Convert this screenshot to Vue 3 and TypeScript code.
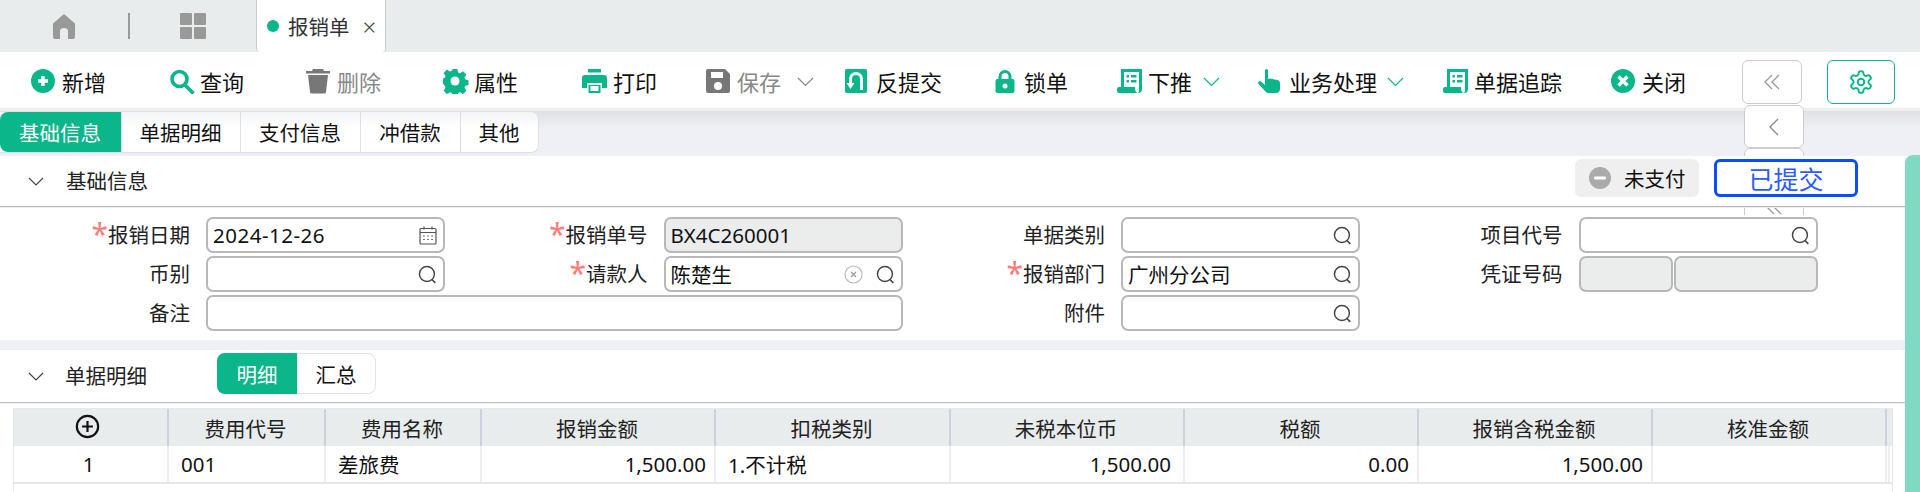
<script setup lang="ts">
interface Shape { d: string; fill?: string; stroke?: string; sw?: number }
interface Tool { label: string; w: number; icon: Shape[]; off?: boolean; chev?: number; chevOff?: boolean }

const G = '#0bb68a'
const K = '#777777'
const W = '#ffffff'

const plus: Shape[] = [
  { d: 'M12 0a12 12 0 1 0 0 24a12 12 0 1 0 0-24z', fill: G },
  { d: 'M10.3 7h3.4v3.3H17v3.4h-3.3V17h-3.4v-3.3H7v-3.4h3.3z', fill: W }
]
const search: Shape[] = [
  { d: 'M10.5 2.5a7.5 7.5 0 1 0 0 15a7.5 7.5 0 1 0 0-15z', stroke: G, sw: 3.6 },
  { d: 'M16 16l8.5 8.5', stroke: G, sw: 3.6 }
]
const trash: Shape[] = [
  { d: 'M7 0h10l1 2h6v2.6H0V2h6z', fill: K },
  { d: 'M2 6h20l-2 17q-.1 1.6-2 1.6H6q-1.9 0-2-1.6z', fill: K }
]
const cog: Shape[] = [
  { d: 'M9.6 0h4.8l.7 3.4 2 .8 2.9-1.9 3.4 3.4-1.9 2.9.8 2 3.2.7v4.8l-3.2.7-.8 2 1.9 2.9-3.4 3.4-2.9-1.9-2 .8-.7 3.4H9.6l-.7-3.4-2-.8-2.9 1.9-3.4-3.4 1.9-2.9-.8-2L0 14.400v-4.800l1.700-.7.800-2-1.900-2.900 3.400-3.400 2.900 1.900 2-.8z', fill: G },
  { d: 'M12 7.500a4.500 4.500 0 1 0 0 9a4.500 4.500 0 1 0 0-9z', fill: W }
]
const printer: Shape[] = [
  { d: 'M6 0h13v3.500H6z', fill: G },
  { d: 'M3 6h19q3 0 3 3v10h-5v-5H5v5H0V9q0-3 3-3z', fill: G },
  { d: 'M6.500 16h12v8h-12z', fill: G },
  { d: 'M8.500 17h8v5h-8z', fill: W }
]
const floppy: Shape[] = [
  { d: 'M2 0h17l5 5v17q0 2-2 2H2q-2 0-2-2V2q0-2 2-2z', fill: K },
  { d: 'M5 3h12v6H5z', fill: W },
  { d: 'M12 13a4 4 0 1 0 0 8a4 4 0 1 0 0-8z', fill: W }
]
const undo: Shape[] = [
  { d: 'M2 0h18q2 0 2 2v20q0 2-2 2H2q-2 0-2-2V2q0-2 2-2z', fill: G },
  { d: 'M16.500 21V10a5.500 5.500 0 0 0-11 0v5', stroke: W, sw: 3 },
  { d: 'M1.500 14h8l-4 6z', fill: W }
]
const lock: Shape[] = [
  { d: 'M7 11V7.500a5 5 0 0 1 10 0V11', stroke: G, sw: 3 },
  { d: 'M4.500 10h15q2 0 2 2v10q0 2-2 2h-15q-2 0-2-2V12q0-2 2-2z', fill: G },
  { d: 'M12 14.500a2.500 2.500 0 1 0 0 5a2.500 2.500 0 1 0 0-5z', fill: W }
]
const doc: Shape[] = [
  { d: 'M4 0h21v20q0 3-3 4h-1q1-1 1-3V3H7v15H4z', fill: G },
  { d: 'M0 20q0-2 2-2h16v2q0 2.500 2 4H2q-2 0-2-2z', fill: G },
  { d: 'M9.500 6h2.500v2.500H9.500zM14 6h5.500v2.500H14zM9.500 11h2.500v2.500H9.500zM14 11h5.500v2.500H14z', fill: G }
]
const hand: Shape[] = [
  { d: 'M7 1.500q0-1.500 1.500-1.500T10 1.500V10l2-.5 1 .3 2 .2 1 .5 2.500.3q3.500.7 3.500 3.700v5q0 4.500-4.500 4.500H10q-1.500 0-3-2L.5 15q-1-1.500.2-2.500t2.800.500L7 16z', fill: G }
]
const close: Shape[] = [
  { d: 'M12 0a12 12 0 1 0 0 24a12 12 0 1 0 0-24z', fill: G },
  { d: 'M7.500 7.500l9 9M16.500 7.500l-9 9', stroke: W, sw: 3.400 }
]

const tools: Tool[] = [
  { label: '新增', w: 138, icon: plus },
  { label: '查询', w: 137, icon: search },
  { label: '删除', w: 137, icon: trash, off: true },
  { label: '属性', w: 139, icon: cog },
  { label: '打印', w: 124, icon: printer },
  { label: '保存', w: 139, icon: floppy, off: true, chev: 16, chevOff: true },
  { label: '反提交', w: 148, icon: undo },
  { label: '锁单', w: 124, icon: lock },
  { label: '下推', w: 141, icon: doc, chev: 11 },
  { label: '业务处理', w: 185, icon: hand, chev: 10 },
  { label: '单据追踪', w: 168, icon: doc },
  { label: '关闭', w: 90, icon: close }
]

const tabs = ['基础信息', '单据明细', '支付信息', '冲借款', '其他']

const columns = [
  { name: '费用代号', text: '001', align: 'left', pad: 7 },
  { name: '费用名称', text: '差旅费', align: 'left', pad: 7 },
  { name: '报销金额', text: '1,500.00', align: 'right', pad: 8 },
  { name: '扣税类别', text: '1.不计税', align: 'left', pad: 7 },
  { name: '未税本位币', text: '1,500.00', align: 'right', pad: 12 },
  { name: '税额', text: '0.00', align: 'right', pad: 8 },
  { name: '报销含税金额', text: '1,500.00', align: 'right', pad: 8 },
  { name: '核准金额', text: '', align: 'right', pad: 7 }
]
</script>

<template>
  <div class="page">
    <header class="topbar">
      <span class="home">
        <svg width="24" height="25" viewBox="0 0 24 25"><path d="M12 0l11 9.500V23q0 2-2 2h-5v-8q0-3-4-3t-4 3v8H3q-2 0-2-2V9.500z" fill="#999" /></svg>
      </span>
      <span class="divider"></span>
      <span class="apps">
        <i></i><i></i><i></i><i></i>
      </span>
      <div class="doc-tab">
        <span class="dot"></span>
        <span class="doc-name">报销单</span>
        <span class="doc-x">×</span>
      </div>
    </header>

    <nav class="toolbar">
      <div v-for="t in tools" :key="t.label" class="tool" :class="{ off: t.off }" :style="{ width: t.w + 'px' }">
        <svg class="tool-icon" width="26" height="25" viewBox="0 0 26 25">
          <path
            v-for="(s, i) in t.icon"
            :key="i"
            :d="s.d"
            :fill="s.fill || 'none'"
            :stroke="s.stroke || 'none'"
            :stroke-width="s.sw || 0"
          />
        </svg>
        <span>{{ t.label }}</span>
        <svg v-if="t.chev" class="chev" :style="{ marginLeft: t.chev + 'px' }" width="17" height="10" viewBox="0 0 17 10">
          <path d="M1 1l7.500 7.500L16 1" fill="none" :stroke="t.chevOff ? '#888' : '#0bb68a'" stroke-width="1.200" />
        </svg>
      </div>
      <div class="tool-right">
        <button class="square">
          <svg width="18" height="16" viewBox="0 0 18 16"><path d="M9 1L2 8l7 7M16 1L9 8l7 7" fill="none" stroke="#999" stroke-width="1.300" /></svg>
        </button>
        <button class="square cfg">
          <svg width="26" height="26" viewBox="0 0 24 24" fill="none" stroke="#0bb68a" stroke-width="1.800">
            <path d="M12.220 2h-.44a2 2 0 0 0-2 2v.18a2 2 0 0 1-1 1.730l-.43.25a2 2 0 0 1-2 0l-.15-.08a2 2 0 0 0-2.730.73l-.22.38a2 2 0 0 0 .73 2.730l.15.1a2 2 0 0 1 1 1.720v.51a2 2 0 0 1-1 1.740l-.15.09a2 2 0 0 0-.73 2.730l.22.38a2 2 0 0 0 2.730.73l.15-.08a2 2 0 0 1 2 0l.43.25a2 2 0 0 1 1 1.730V20a2 2 0 0 0 2 2h.44a2 2 0 0 0 2-2v-.18a2 2 0 0 1 1-1.730l.43-.25a2 2 0 0 1 2 0l.15.08a2 2 0 0 0 2.730-.73l.22-.39a2 2 0 0 0-.73-2.730l-.15-.08a2 2 0 0 1-1-1.740v-.5a2 2 0 0 1 1-1.740l.15-.09a2 2 0 0 0 .73-2.730l-.22-.38a2 2 0 0 0-2.730-.73l-.15.08a2 2 0 0 1-2 0l-.43-.25a2 2 0 0 1-1-1.730V4a2 2 0 0 0-2-2z" />
            <circle cx="12" cy="12" r="3" />
          </svg>
        </button>
      </div>
    </nav>

    <div class="tabstrip">
      <div class="tabs">
        <span v-for="(t, i) in tabs" :key="t" class="tab" :class="'tab' + i">{{ t }}</span>
      </div>
    </div>

    <div class="pager">
      <span class="pg">
        <svg width="10" height="18" viewBox="0 0 10 18"><path d="M9 1L1 9l8 8" fill="none" stroke="#888" stroke-width="1.300" /></svg>
      </span>
      <span class="pg short"></span>
      <span class="pg">
        <svg width="18" height="16" viewBox="0 0 18 16"><path d="M9 1L2 8l7 7M16 1L9 8l7 7" fill="none" stroke="#999" stroke-width="1.300" /></svg>
      </span>
    </div>

    <section class="head">
      <svg class="fold" width="16" height="9" viewBox="0 0 16 9"><path d="M1 1l7 7 7-7" fill="none" stroke="#444" stroke-width="1.200" /></svg>
      <span class="title">基础信息</span>
      <div class="status">
        <span class="unpaid">
          <svg width="22" height="22" viewBox="0 0 22 22"><circle cx="11" cy="11" r="11" fill="#aaa" /><rect x="5" y="9.500" width="12" height="3" rx="1" fill="#fff" /></svg>
          未支付
        </span>
        <span class="submitted">已提交</span>
      </div>
    </section>

    <section class="form">
      <div class="field">
        <label><b>*</b>报销日期</label>
        <div class="input date">
          <span>2024-12-26</span>
          <svg class="cal" width="18" height="19" viewBox="0 0 18 19" fill="none" stroke="#555" stroke-width="1.200">
            <rect x="1" y="2.500" width="16" height="15.500" rx="1" />
            <path d="M1 6.500h16M5 .5v3M13 .5v3" />
            <path d="M4 10h2M8 10h2M12 10h2M4 13.500h2M8 13.500h2M12 13.500h2" stroke="#777" />
          </svg>
        </div>
      </div>
      <div class="field">
        <label><b>*</b>报销单号</label>
        <div class="input gray"><span>BX4C260001</span></div>
      </div>
      <div class="field">
        <label>单据类别</label>
        <div class="input"><svg class="mag" width="19" height="19" viewBox="0 0 17 17"><circle cx="8" cy="8" r="6.700" fill="none" stroke="#444" stroke-width="1.300" /><path d="M12.500 13l3 3" stroke="#444" stroke-width="1.500" /></svg></div>
      </div>
      <div class="field">
        <label>项目代号</label>
        <div class="input"><svg class="mag" width="19" height="19" viewBox="0 0 17 17"><circle cx="8" cy="8" r="6.700" fill="none" stroke="#444" stroke-width="1.300" /><path d="M12.500 13l3 3" stroke="#444" stroke-width="1.500" /></svg></div>
      </div>

      <div class="field">
        <label>币别</label>
        <div class="input"><svg class="mag" width="19" height="19" viewBox="0 0 17 17"><circle cx="8" cy="8" r="6.700" fill="none" stroke="#444" stroke-width="1.300" /><path d="M12.500 13l3 3" stroke="#444" stroke-width="1.500" /></svg></div>
      </div>
      <div class="field">
        <label><b>*</b>请款人</label>
        <div class="input">
          <span>陈楚生</span>
          <svg class="clear" width="19" height="19" viewBox="0 0 19 19"><circle cx="9.500" cy="9.500" r="8.500" fill="none" stroke="#bbb" stroke-width="1.200" /><path d="M7 7l5 5M12 7l-5 5" stroke="#999" stroke-width="1.200" /></svg>
          <svg class="mag near" width="19" height="19" viewBox="0 0 17 17"><circle cx="8" cy="8" r="6.700" fill="none" stroke="#444" stroke-width="1.300" /><path d="M12.500 13l3 3" stroke="#444" stroke-width="1.500" /></svg>
        </div>
      </div>
      <div class="field">
        <label><b>*</b>报销部门</label>
        <div class="input">
          <span>广州分公司</span>
          <svg class="mag" width="19" height="19" viewBox="0 0 17 17"><circle cx="8" cy="8" r="6.700" fill="none" stroke="#444" stroke-width="1.300" /><path d="M12.500 13l3 3" stroke="#444" stroke-width="1.500" /></svg>
        </div>
      </div>
      <div class="field">
        <label>凭证号码</label>
        <div class="pair">
          <div class="input gray first"></div>
          <div class="input gray"></div>
        </div>
      </div>

      <div class="field wide">
        <label>备注</label>
        <div class="input"></div>
      </div>
      <div class="field">
        <label>附件</label>
        <div class="input"><svg class="mag" width="19" height="19" viewBox="0 0 17 17"><circle cx="8" cy="8" r="6.700" fill="none" stroke="#444" stroke-width="1.300" /><path d="M12.500 13l3 3" stroke="#444" stroke-width="1.500" /></svg></div>
      </div>
    </section>

    <section class="head second">
      <svg class="fold" width="16" height="9" viewBox="0 0 16 9"><path d="M1 1l7 7 7-7" fill="none" stroke="#444" stroke-width="1.200" /></svg>
      <span class="title">单据明细</span>
      <div class="seg">
        <span class="on">明细</span>
        <span>汇总</span>
      </div>
    </section>

    <section class="table">
      <div class="row thead">
        <div class="cell idx">
          <svg width="25" height="25" viewBox="0 0 23 23"><circle cx="11.500" cy="11.500" r="9.800" fill="none" stroke="#111" stroke-width="2" /><path d="M11.500 6.500v10M6.500 11.500h10" stroke="#111" stroke-width="2" /></svg>
        </div>
        <div v-for="c in columns" :key="c.name" class="cell">{{ c.name }}</div>
        <div class="cell"></div>
      </div>
      <div class="row tbody">
        <div class="cell idx">1</div>
        <div v-for="c in columns" :key="c.name" class="cell" :class="c.align" :style="{ paddingRight: c.pad + 'px' }">{{ c.text }}</div>
        <div class="cell"></div>
      </div>
    </section>

    <div class="scrollbar"></div>
  </div>
</template>

<style>
html, body { margin: 0; background: #fff; }
</style>

<style scoped>
.page {
  position: relative;
  width: 1920px;
  height: 492px;
  overflow: hidden;
  background: #fff;
  color: #111;
  font-family: "Noto Sans", "Noto Sans CJK SC", sans-serif;
  font-size: 20.500px;
}
.topbar {
  display: flex;
  align-items: center;
  height: 52px;
  background: #e9ecec;
}
.home { display: flex; margin-left: 52px; margin-top: 0; }
.divider { width: 2px; height: 26px; background: #999; margin-left: 52px; }
.apps {
  display: grid;
  grid-template-columns: 12px 12px;
  grid-auto-rows: 12px;
  gap: 2px;
  margin-left: 50px;
}
.apps i { background: #999; border-radius: 1px; }
.doc-tab {
  display: flex;
  align-items: center;
  align-self: stretch;
  width: 130px;
  margin-left: 50px;
  background: #fff;
  border: solid #ccc;
  border-width: 0 1px 0 1px;
  border-radius: 0 0 4px 4px;
  box-sizing: border-box;
}
.dot { width: 12px; height: 12px; border-radius: 50%; background: #0bb68a; margin-left: 10px; }
.doc-name { margin-left: 9px; color: #333; }
.doc-x { margin-left: 13px; font-size: 24px; color: #444; font-weight: 300; }

.toolbar {
  display: flex;
  align-items: center;
  box-sizing: border-box;
  height: 56px;
  padding-left: 31px;
  padding-top: 4px;
  background: #fff;
  font-size: 22px;
  line-height: 30px;
}
.tool { display: flex; align-items: center; flex: none; }
.tool-icon { margin-right: 5px; margin-top: -2px; flex: none; }
.tool.off { color: #888; }
.chev { flex: none; }
.tool-right { display: flex; margin-left: 41px; gap: 25px; margin-top: 0; }
.square {
  display: flex;
  align-items: center;
  justify-content: center;
  box-sizing: border-box;
  width: 60px;
  height: 44px;
  padding: 0;
  background: #fff;
  border: 1px solid #ccc;
  border-radius: 6px;
}
.square.cfg { width: 68px; border-color: #0bb68a; }

.tabstrip {
  box-sizing: border-box;
  height: 48px;
  padding-top: 4px;
  background: linear-gradient(#f0f0f0 0, #f0f0f0 3px, #dfe0e2 3px, #eff0f5 20px, #eff0f5 100%);
}
.tabs {
  display: flex;
  width: 539px;
  height: 41px;
  box-sizing: border-box;
  background: linear-gradient(#f3f4f6, #fff 40%);
  border-radius: 0 8px 8px 0;
  border: solid #dcdfe6;
  border-width: 0 1px 1px 0;
}
.tab {
  display: flex;
  align-items: center;
  justify-content: center;
  box-sizing: border-box;
  border-left: 1px solid #dcdfe6;
  padding-right: 1px;
}
.tab0 { width: 121px; background: #0bb68a; color: #fff; border: 0; border-radius: 8px 0 0 8px; }
.tab1 { width: 119px; }
.tab2 { width: 120px; }
.tab3 { width: 100px; }
.tab4 { width: 78px; }

.pager {
  position: absolute;
  left: 1744px;
  top: 105px;
  width: 60px;
  z-index: 1;
  display: flex;
  flex-direction: column;
}
.pg {
  display: flex;
  align-items: center;
  justify-content: center;
  box-sizing: border-box;
  height: 43px;
  background: #fff;
  border: 1px solid #ccc;
  border-radius: 6px;
}
.pg.short { height: 37px; }

.head {
  position: relative;
  z-index: 2;
  display: flex;
  align-items: center;
  box-sizing: border-box;
  height: 51px;
  background: #fff;
  border-bottom: 1px solid #b8b8b8;
  box-shadow: 0 1px 0 #efefef;
}
.fold { margin-left: 28px; flex: none; }
.title { margin-left: 22px; color: #222; margin-top: -2px; }
.status { display: flex; margin-left: auto; margin-right: 62px; gap: 15px; margin-top: -6px; }
.unpaid {
  display: flex;
  align-items: center;
  box-sizing: border-box;
  width: 124px;
  height: 38px;
  padding-left: 14px;
  gap: 13px;
  background: #efefef;
  border-radius: 6px;
}
.submitted {
  display: flex;
  align-items: center;
  justify-content: center;
  box-sizing: border-box;
  width: 144px;
  height: 38px;
  border: 3px solid #0a4dff;
  border-radius: 6px;
  color: #2a5cff;
  font-size: 25px;
}

.form {
  position: relative;
  z-index: 2;
  display: grid;
  grid-template-columns: repeat(4, 457.500px);
  grid-auto-rows: 36px;
  row-gap: 3px;
  box-sizing: border-box;
  height: 125px;
  margin-top: 8px;
  padding-top: 2px;
  background: #fff;
}
.field { display: flex; align-items: center; }
.field.wide { grid-column: span 2; }
.field label {
  flex: none;
  width: 190px;
  margin-right: 16px;
  text-align: right;
  line-height: 36px;
  color: #222;
}
.field label b {
  color: #ff7b7b;
  font-weight: 400;
  font-size: 30px;
  line-height: 20px;
  vertical-align: -2px;
  margin-right: 0;
}
.input {
  display: flex;
  align-items: center;
  box-sizing: border-box;
  width: 239px;
  height: 36px;
  padding: 0 6px 0 5px;
  border: 2px solid #b8b8b8;
  border-radius: 7px;
  background: #fff;
}
.field.wide .input { width: 697px; }
.input.gray { background: #ebecec; }
.date span { letter-spacing: 0.500px; }
.mag { margin-left: auto; flex: none; }
.clear { margin-left: auto; flex: none; margin-right: 13px; }
.mag.near { margin-left: 0; }
.cal { margin-left: auto; flex: none; }
.pair { display: flex; gap: 1px; }
.pair .input { width: 144px; }
.pair .input.first { width: 94px; }

.second {
  height: 63px;
  border-top: 10px solid #eff0f5;
  border-bottom-color: #c0c0c8;
}
.second .title { margin-left: 21px; }
.seg {
  display: flex;
  margin-left: 70px;
  height: 41px;
  margin-top: -5px;
  box-sizing: border-box;
  border: 1px solid #e2e4ea;
  border-left: 0;
  border-radius: 8px;
}
.seg span {
  display: flex;
  align-items: center;
  justify-content: center;
  width: 78px;
}
.seg .on {
  width: 80px;
  margin-top: -1px;
  margin-bottom: -1px;
  background: #0bb68a;
  color: #fff;
  border-radius: 8px 0 0 8px;
}

.table {
  position: relative;
  z-index: 2;
  box-sizing: border-box;
  width: 1880px;
  margin-left: 13px;
  margin-top: 5px;
  height: 90px;
  border: solid #e6e8ec;
  border-width: 1px 1px 0 1px;
}
.row {
  display: grid;
  grid-template-columns: 155px 157px 156px 234px 235px 234px 234px 234px 234px 3px;
}
.thead { height: 37px; background: #e9ecec; }
.thead .cell {
  display: flex;
  align-items: center;
  justify-content: center;
  border-right: 2px solid #cdd0de;
  color: #222;
  box-sizing: border-box;
  padding-right: 2px;
}
.thead .cell:last-child { border-right: 0; padding: 0; }
.thead .idx { padding: 0 6px 2px 0; }
.tbody { height: 36px; border-bottom: 2px solid #e8e8e8; }
.tbody .cell {
  display: flex;
  align-items: center;
  box-sizing: border-box;
  padding: 0 7px 0 12px;
  border-right: 2px solid #eceef2;
}
.tbody .cell:last-child { padding: 0; }
.tbody .idx { justify-content: center; padding: 0 4px 0 0; }
.tbody .right { justify-content: flex-end; }

.scrollbar {
  position: absolute;
  z-index: 3;
  left: 1905px;
  top: 155px;
  width: 15px;
  height: 337px;
  background: #80d9c3;
  border-radius: 8px 0 0 0;
}
</style>
